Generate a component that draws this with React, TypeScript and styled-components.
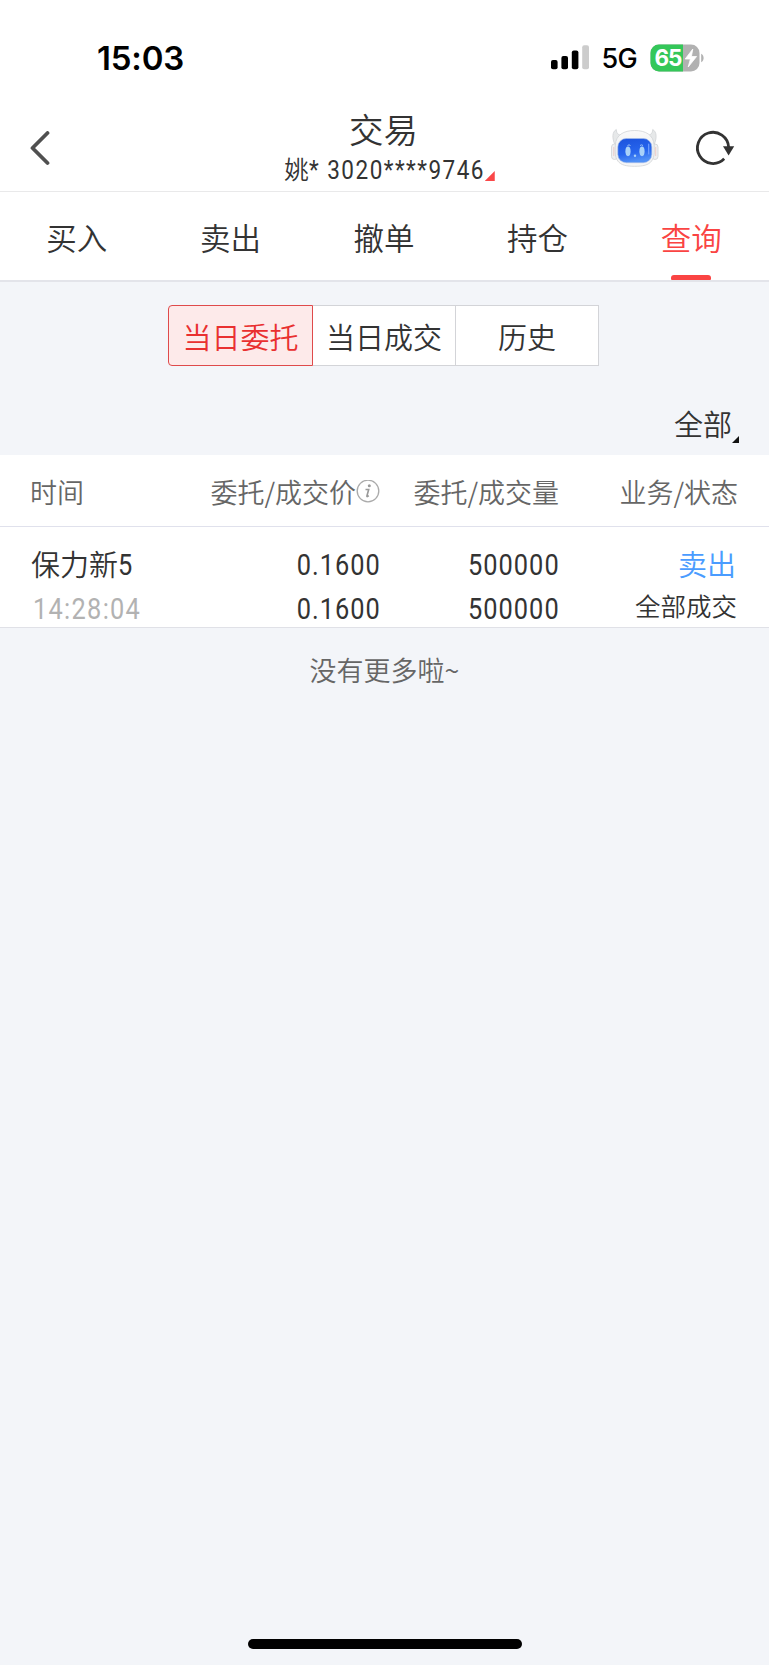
import React from "react";
import styled, { createGlobalStyle } from "styled-components";

const GlobalStyle = createGlobalStyle`
  * { box-sizing: border-box; }
  body {
    margin: 0;
    background: #f3f5f9;
    color: #333;
    font-family: "Noto Sans CJK SC", sans-serif;
    font-weight: 350;
  }
`;

const Screen = styled.div`
  display: flex;
  flex-direction: column;
  width: 769px;
  height: 1665px;
  overflow: hidden;
  background: #f3f5f9;
`;

const StatusBar = styled.div`
  display: flex;
  align-items: center;
  height: 100px;
  padding: 15px 64px 0 97px;
  background: #fff;
  color: #000;
  font-family: Inter, sans-serif;
`;

const Clock = styled.span`
  flex: 1;
  font-size: 33px;
  font-weight: 600;
  letter-spacing: -0.2px;
  line-height: 40px;
`;

const Network = styled.span`
  margin: 2px 13px 0 12px;
  font-size: 27px;
  font-weight: 450;
  line-height: 40px;
  letter-spacing: -0.7px;
`;

const Header = styled.header`
  display: grid;
  grid-template-columns: 200px 1fr 200px;
  height: 92px;
  background: #fff;
  border-bottom: 1px solid #e9e9ea;
`;

const HeaderLeft = styled.div`
  display: flex;
  padding: 31px 0 0 29px;
`;

const HeaderRight = styled.div`
  display: flex;
  justify-content: flex-end;
  gap: 34px;
  padding: 26px 33px 0 0;
`;

const HeaderCenter = styled.div`
  display: flex;
  flex-direction: column;
  align-items: center;
`;

const Title = styled.div`
  height: 52px;
  padding-right: 2px;
  font-size: 34.5px;
  line-height: 56px;
`;

const Account = styled.div`
  display: flex;
  align-items: center;
  margin-left: 10px;
  height: 34px;
  font-size: 24.5px;
  line-height: 32px;
  white-space: pre;
`;

const AccountName = styled.span`
  margin-top: -1px;
`;

const AccountNumber = styled.span`
  display: inline-block;
  width: 175px;
  margin-top: 4px;
  font-family: Roboto, sans-serif;
  font-size: 25px;
  font-weight: 400;
  letter-spacing: 1.65px;
  transform: scaleX(0.9);
  transform-origin: left center;
`;

const Corner = styled.i<{ $size: number; $color: string }>`
  width: ${(p) => p.$size}px;
  height: ${(p) => p.$size}px;
  background: ${(p) => p.$color};
  clip-path: polygon(100% 0, 100% 100%, 0 100%);
`;

const AccountCorner = styled(Corner)`
  align-self: flex-end;
  margin: 0 0 5px 1px;
`;

const Tabs = styled.nav`
  display: grid;
  grid-template-columns: repeat(5, 1fr);
  height: 90px;
  padding-right: 1px;
  background: #fff;
  border-bottom: 2px solid #e3e4ea;
`;

const Tab = styled.div<{ $active?: boolean }>`
  display: flex;
  flex-direction: column;
  align-items: center;
  justify-content: space-between;
  font-size: 30.5px;
  line-height: 90px;
  color: ${(p) => (p.$active ? "#fa4443" : "#333")};
  &::after {
    content: "";
    flex: none;
    width: 40px;
    height: 5px;
    margin-top: -7px;
    border-radius: 3px 3px 1px 1px;
    background: ${(p) => (p.$active ? "#fa4443" : "transparent")};
  }
`;

const Segments = styled.div`
  display: grid;
  grid-template-columns: 145px 143px 143px;
  width: 431px;
  height: 61px;
  margin: 23px 0 0 168px;
`;

const Segment = styled.div<{ $active?: boolean }>`
  text-align: center;
  height: 61px;
  font-size: 29px;
  line-height: 61px;
  border: 1px solid ${(p) => (p.$active ? "#df4a4b" : "#d3d4d8")};
  ${(p) => !p.$active && "border-left: 0;"}
  border-radius: ${(p) => (p.$active ? "4px 0 0 4px" : "0")};
  color: ${(p) => (p.$active ? "#e93030" : "#333")};
  background: ${(p) => (p.$active ? "#fdeaea" : "#fff")};
`;

const FilterRow = styled.div`
  display: flex;
  justify-content: flex-end;
  height: 89px;
  padding: 28px 30px 0 0;
  font-size: 29px;
  line-height: 58px;
`;

const FilterCorner = styled(Corner)`
  margin-top: 42px;
`;

const columns = "190px 190px 179px 179px";

const TableHead = styled.div`
  display: grid;
  grid-template-columns: ${columns};
  height: 72px;
  background: #fff;
  border-bottom: 1px solid #e0e1ec;
  color: #666;
  font-size: 27px;
  line-height: 73px;
`;

const HeadCell = styled.div<{ $first?: boolean }>`
  display: flex;
  align-items: center;
  justify-content: ${(p) => (p.$first ? "flex-start" : "flex-end")};
  padding-left: ${(p) => (p.$first ? 30 : 0)}px;
  white-space: nowrap;
`;

const Record = styled.div`
  display: grid;
  grid-template-columns: ${columns};
  height: 101px;
  padding-top: 13px;
  background: #fff;
  border-bottom: 1px solid #e0e1e7;
`;

const RecordCell = styled.div<{ $first?: boolean }>`
  display: flex;
  flex-direction: column;
  align-items: ${(p) => (p.$first ? "flex-start" : "flex-end")};
  padding-left: ${(p) => (p.$first ? 31 : 0)}px;
`;

const Line = styled.div<{ $color?: string }>`
  height: 44px;
  font-size: 29px;
  line-height: 46px;
  color: ${(p) => p.$color ?? "#333"};
  white-space: nowrap;
`;

const Status = styled(Line)`
  padding-right: 1px;
  font-size: 25.5px;
  line-height: 41px;
`;

const Action = styled(Line)`
  padding-right: 2px;
`;

const Time = styled(Line)`
  padding-left: 2px;
`;

const Digits = styled.span<{ $left?: boolean; $spacing?: number }>`
  display: inline-block;
  line-height: 44px;
  font-family: Roboto, sans-serif;
  font-size: 29.5px;
  font-weight: 400;
  letter-spacing: ${(p) => p.$spacing ?? 1.2}px;
  margin-right: ${(p) => (p.$left ? 0 : -1)}px;
  transform: translateY(-1px) scaleX(0.86);
  transform-origin: ${(p) => (p.$left ? "left" : "right")} center;
`;

const EndNote = styled.div`
  padding-top: 20px;
  text-align: center;
  font-size: 27px;
  line-height: 44px;
  color: #666;
`;

const HomeIndicator = styled.div`
  width: 274px;
  height: 10px;
  margin: auto auto 16px 248px;
  border-radius: 5px;
  background: #000;
`;

const Signal = () => (
  <svg width="39" height="25" viewBox="0 0 39 25">
    <rect x="0" y="15" width="6.6" height="9.3" rx="2" />
    <rect x="10.4" y="11" width="6.6" height="13.3" rx="2" />
    <rect x="20.8" y="5.5" width="6.6" height="18.8" rx="2" />
    <rect x="31.2" y="0.2" width="6.8" height="24.1" rx="2" fill="#ccc" />
  </svg>
);

const Battery = () => (
  <svg width="55" height="28" viewBox="0 0 55 28">
    <rect x="0.5" y="0.5" width="49" height="27" rx="8.5" fill="#b1b1b1" />
    <path d="M33 0.5H9A8.5 8.5 0 0 0 .5 9v10A8.5 8.5 0 0 0 9 27.5h24z" fill="#34c759" />
    <path d="M51.2 9.7c3.2 1.5 3.2 7 0 8.5z" fill="#b1b1b1" />
    <text x="4.5" y="21.7" fill="#fff" fontFamily="Inter, sans-serif" fontWeight="700" fontSize="22.5" textLength="28">65</text>
    <path d="M42.8 5 35.2 15h5.2l-2.2 8L46.6 12.5h-5.2z" fill="#fff" stroke="#fff" strokeWidth="0.8" strokeLinejoin="round" />
  </svg>
);

const BackIcon = () => (
  <svg width="24" height="38" viewBox="0 0 24 38" fill="none" stroke="#505050" strokeWidth="3.8" strokeLinecap="round" strokeLinejoin="round">
    <path d="M18.5 2 3.5 17l15 15" />
  </svg>
);

const RobotIcon = () => (
  <svg width="50" height="44" viewBox="0 0 50 44">
    <defs>
      <linearGradient id="shell" x1="0" y1="0" x2="0" y2="1">
        <stop offset="0" stopColor="#fafafa" />
        <stop offset="0.6" stopColor="#eceeef" />
        <stop offset="1" stopColor="#f7f7f8" />
      </linearGradient>
      <linearGradient id="visor" x1="0" y1="0" x2="0.25" y2="1">
        <stop offset="0" stopColor="#1b52dc" />
        <stop offset="0.65" stopColor="#2766ee" />
        <stop offset="1" stopColor="#4f8ff5" />
      </linearGradient>
    </defs>
    <g stroke="#d0d3d5" strokeWidth="0.8">
      <path d="M5 19C2 12 2 6 6.3 3.5 6.4 8 8.8 9.2 13 9.6zM44 19c3-7 3-13-1.3-15.5-.1 4.5-2.5 5.7-6.7 6.1z" fill="#e6e8e9" />
      <rect x="1.5" y="18" width="6" height="15.5" rx="3" fill="#eff0f1" />
      <rect x="42" y="18" width="6" height="15.5" rx="3" fill="#eff0f1" />
      <path d="M24.7 4.5c11 0 18.8 4.5 19.4 14.5.4 7 .4 12-2.5 16-3 4.2-9 5.3-16.9 5.3S10.8 39.2 7.8 35c-2.9-4-2.9-9-2.5-16C5.9 9 13.7 4.5 24.7 4.5z" fill="url(#shell)" />
    </g>
    <path d="M3.8 21v9M45.7 21v9" stroke="#edc8c5" strokeWidth="0.9" />
    <rect x="7.8" y="12.5" width="34" height="24.2" rx="8.5" fill="url(#visor)" stroke="#a9c0ea" strokeWidth="0.6" />
    <path d="M38.7 18v10" stroke="#6f9fff" strokeWidth="1.2" strokeLinecap="round" />
    <g fill="#a9d2f8">
      <ellipse cx="18" cy="25.3" rx="2.6" ry="4.9" />
      <ellipse cx="32" cy="25.3" rx="2.6" ry="4.9" />
      <circle cx="25" cy="29.8" r="1.2" />
    </g>
    <path d="M17.5 19.5q1.5-1.3 3 0M30 19.5q1.5-1.3 3 0" stroke="#9bc1f5" fill="none" />
  </svg>
);

const RefreshIcon = () => (
  <svg width="42" height="46" viewBox="0 0 42 46">
    <path d="M30.2 32.8A15.6 15.6 0 1 1 34.6 21" fill="none" stroke="#333" strokeWidth="2.8" />
    <path d="M29 20.3h11.2l-5.6 9.2z" fill="#333" />
  </svg>
);

const InfoIcon = () => (
  <svg width="24" height="24" viewBox="0 0 24 24">
    <circle cx="12" cy="11" r="10.8" fill="none" stroke="#aaa" strokeWidth="1.3" />
    <circle cx="13.3" cy="5.7" r="1.5" fill="#999" />
    <path d="M9.5 9.5h3.2l-1.8 6.5q-.2 1 .9.4l1-.7" fill="none" stroke="#999" strokeWidth="1.6" />
  </svg>
);

export default function App() {
  return (
    <Screen>
      <GlobalStyle />
      <StatusBar>
        <Clock>15:03</Clock>
        <Signal />
        <Network>5G</Network>
        <Battery />
      </StatusBar>
      <Header>
        <HeaderLeft><BackIcon /></HeaderLeft>
        <HeaderCenter>
          <Title>交易</Title>
          <Account>
            <AccountName>姚</AccountName>
            <AccountNumber>* 3020****9746</AccountNumber>
            <AccountCorner $size={10} $color="#fa4748" />
          </Account>
        </HeaderCenter>
        <HeaderRight>
          <RobotIcon />
          <RefreshIcon />
        </HeaderRight>
      </Header>
      <Tabs>
        <Tab>买入</Tab>
        <Tab>卖出</Tab>
        <Tab>撤单</Tab>
        <Tab>持仓</Tab>
        <Tab $active>查询</Tab>
      </Tabs>
      <Segments>
        <Segment $active>当日委托</Segment>
        <Segment>当日成交</Segment>
        <Segment>历史</Segment>
      </Segments>
      <FilterRow>
        全部
        <FilterCorner $size={7} $color="#111" />
      </FilterRow>
      <TableHead>
        <HeadCell $first>时间</HeadCell>
        <HeadCell>委托/成交价<InfoIcon /></HeadCell>
        <HeadCell>委托/成交量</HeadCell>
        <HeadCell>业务/状态</HeadCell>
      </TableHead>
      <Record>
        <RecordCell $first>
          <Line>保力新<Digits $left>5</Digits></Line>
          <Time $color="#b2b2b2"><Digits $left $spacing={1.5}>14:28:04</Digits></Time>
        </RecordCell>
        <RecordCell>
          <Line><Digits>0.1600</Digits></Line>
          <Line><Digits>0.1600</Digits></Line>
        </RecordCell>
        <RecordCell>
          <Line><Digits>500000</Digits></Line>
          <Line><Digits>500000</Digits></Line>
        </RecordCell>
        <RecordCell>
          <Action $color="#4a9cff">卖出</Action>
          <Status>全部成交</Status>
        </RecordCell>
      </Record>
      <EndNote>没有更多啦~</EndNote>
      <HomeIndicator />
    </Screen>
  );
}
